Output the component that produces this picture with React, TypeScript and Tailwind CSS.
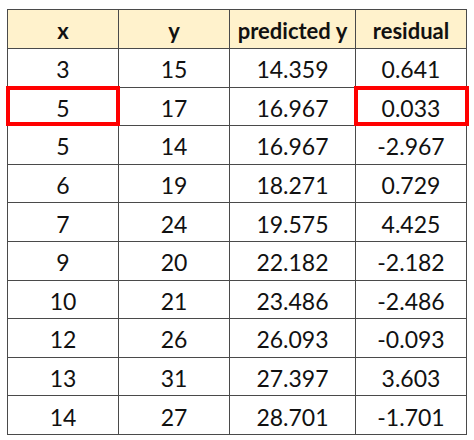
import React from "react";

const rows: [string, string, string, string][] = [
  ["3", "15", "14.359", "0.641"],
  ["5", "17", "16.967", "0.033"],
  ["5", "14", "16.967", "-2.967"],
  ["6", "19", "18.271", "0.729"],
  ["7", "24", "19.575", "4.425"],
  ["9", "20", "22.182", "-2.182"],
  ["10", "21", "23.486", "-2.486"],
  ["12", "26", "26.093", "-0.093"],
  ["13", "31", "27.397", "3.603"],
  ["14", "27", "28.701", "-1.701"],
];

export default function App() {
  return (
    <div className="w-[474px] h-[440px] bg-white pt-[9px] pl-[7px]" style={{ fontFamily: "Lato, 'Noto Sans', sans-serif" }}>
      <table className="table-fixed border-collapse w-[459px] text-[#111111] text-[23px]">
        <colgroup>
          <col className="w-[111px]" />
          <col className="w-[111px]" />
          <col className="w-[126px]" />
          <col className="w-[111px]" />
        </colgroup>
        <thead>
          <tr className="h-[39px] bg-[#fff2cc]">
            {["x", "y", "predicted y", "residual"].map((h) => (
              <th key={h} className="border border-[#4a4a4a] font-bold text-center p-0 pt-[3px] leading-none text-[22px]">
                {h}
              </th>
            ))}
          </tr>
        </thead>
        <tbody>
          {rows.map((r, i) => (
            <tr key={i} className="h-[38.6px]">
              {r.map((c, j) => (
                <td key={j} className="relative border border-[#4a4a4a] text-center p-0 pt-[4px] leading-none">
                  {c}
                  {i === 1 && j === 0 && (
                    <div className="absolute left-[-2px] top-[-2px] right-[-2px] bottom-[-1px] border-4 border-[#ff0000]" />
                  )}
                  {i === 1 && j === 3 && (
                    <div className="absolute left-[-2px] top-[-2px] right-[-3px] bottom-[-1px] border-4 border-[#ff0000]" />
                  )}
                </td>
              ))}
            </tr>
          ))}
        </tbody>
      </table>
    </div>
  );
}
